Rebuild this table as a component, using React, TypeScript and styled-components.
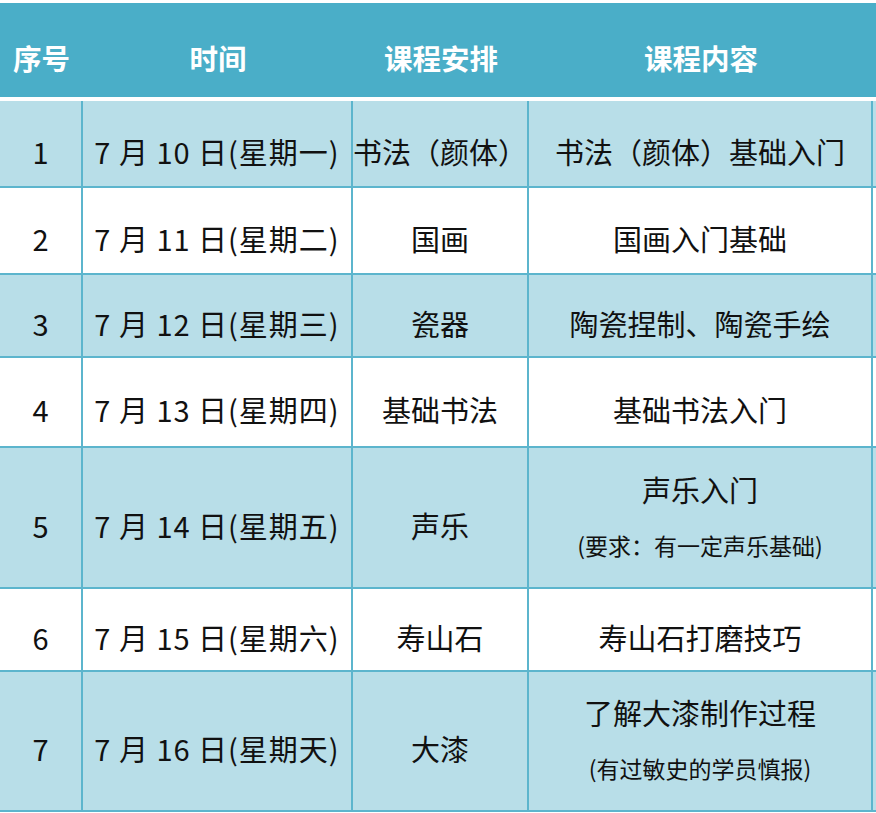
import React from "react";
import styled, { createGlobalStyle } from "styled-components";

const GlobalStyle = createGlobalStyle`
  html, body {
    margin: 0;
    padding: 0;
    background: #ffffff;
  }
  body {
    font-family: "Noto Sans CJK SC", "Noto Sans", sans-serif;
  }
`;

const columns = "83px 270px 176px 344px 200px";

type Course = {
  no: string;
  date: string;
  name: string;
  content: string;
  note?: string;
  height: number;
};

const courses: Course[] = [
  { no: "1", date: "7 月 10 日(星期一)", name: "书法（颜体）", content: "书法（颜体）基础入门", height: 87 },
  { no: "2", date: "7 月 11 日(星期二)", name: "国画", content: "国画入门基础", height: 87 },
  { no: "3", date: "7 月 12 日(星期三)", name: "瓷器", content: "陶瓷捏制、陶瓷手绘", height: 83 },
  { no: "4", date: "7 月 13 日(星期四)", name: "基础书法", content: "基础书法入门", height: 90 },
  {
    no: "5",
    date: "7 月 14 日(星期五)",
    name: "声乐",
    content: "声乐入门",
    note: "(要求：有一定声乐基础)",
    height: 141,
  },
  { no: "6", date: "7 月 15 日(星期六)", name: "寿山石", content: "寿山石打磨技巧", height: 83 },
  {
    no: "7",
    date: "7 月 16 日(星期天)",
    name: "大漆",
    content: "了解大漆制作过程",
    note: "(有过敏史的学员慎报)",
    height: 140,
  },
];

const Page = styled.div`
  width: 876px;
  height: 813px;
  overflow: hidden;
  padding-top: 3px;
  box-sizing: border-box;
`;

const Table = styled.div`
  width: 1073px;
`;

const HeadRow = styled.div`
  display: grid;
  grid-template-columns: ${columns};
  height: 94px;
  background: #4aaec8;
  margin-bottom: 4px;
`;

const HeadCell = styled.div`
  display: flex;
  align-items: center;
  justify-content: center;
  padding-top: 14px;
  box-sizing: border-box;
  color: #ffffff;
  font-size: 28.5px;
  font-weight: 700;
`;

const Row = styled.div<{ $shaded: boolean; $height: number }>`
  display: grid;
  grid-template-columns: ${columns};
  height: ${(p) => p.$height}px;
  background: ${(p) => (p.$shaded ? "#b8dee8" : "#ffffff")};
`;

const Cell = styled.div<{ $stacked?: boolean; $spaced?: boolean }>`
  display: flex;
  flex-direction: column;
  align-items: center;
  justify-content: center;
  padding: ${(p) => (p.$stacked ? "0 0 6px" : "14px 0 0")};
  box-sizing: border-box;
  border-right: 2px solid #5cb5cd;
  border-bottom: 2px solid #5cb5cd;
  color: #111111;
  font-size: 29px;
  letter-spacing: ${(p) => (p.$spaced ? "1px" : "0")};
  white-space: nowrap;
`;

const Note = styled.div`
  font-size: 23px;
  margin-top: 18px;
`;

export default function App() {
  return (
    <Page>
      <GlobalStyle />
      <Table>
        <HeadRow>
          <HeadCell>序号</HeadCell>
          <HeadCell>时间</HeadCell>
          <HeadCell>课程安排</HeadCell>
          <HeadCell>课程内容</HeadCell>
          <HeadCell />
        </HeadRow>
        {courses.map((c, i) => (
          <Row key={c.no} $shaded={i % 2 === 0} $height={c.height}>
            <Cell>{c.no}</Cell>
            <Cell $spaced>{c.date}</Cell>
            <Cell>{c.name}</Cell>
            <Cell $stacked={!!c.note}>
              <div>{c.content}</div>
              {c.note && <Note>{c.note}</Note>}
            </Cell>
            <Cell />
          </Row>
        ))}
      </Table>
    </Page>
  );
}
